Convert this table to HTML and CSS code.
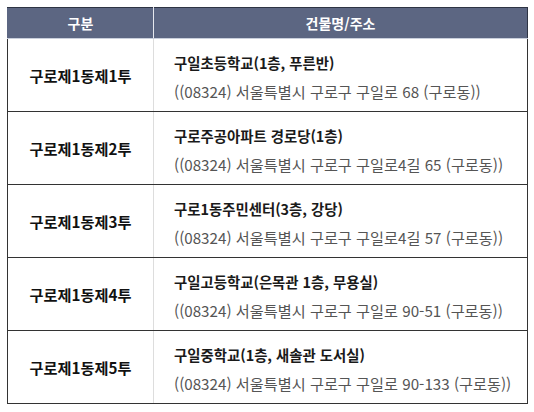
FILE: index.html
```html
<!DOCTYPE html>
<html lang="ko">
<head>
<meta charset="utf-8">
<link rel="stylesheet" href="styles.css">
</head>
<body>
<table class="tbl">
  <thead>
    <tr><th class="c1">구분</th><th class="c2">건물명/주소</th></tr>
  </thead>
  <tbody>
    <tr><td class="name">구로제1동제1투</td><td class="addr"><div class="title">구일초등학교(1층, 푸른반)</div><div class="sub">((08324) 서울특별시 구로구 구일로 68 (구로동))</div></td></tr>
    <tr><td class="name">구로제1동제2투</td><td class="addr"><div class="title">구로주공아파트 경로당(1층)</div><div class="sub">((08324) 서울특별시 구로구 구일로4길 65 (구로동))</div></td></tr>
    <tr><td class="name">구로제1동제3투</td><td class="addr"><div class="title">구로1동주민센터(3층, 강당)</div><div class="sub">((08324) 서울특별시 구로구 구일로4길 57 (구로동))</div></td></tr>
    <tr><td class="name">구로제1동제4투</td><td class="addr"><div class="title">구일고등학교(은목관 1층, 무용실)</div><div class="sub">((08324) 서울특별시 구로구 구일로 90-51 (구로동))</div></td></tr>
    <tr><td class="name">구로제1동제5투</td><td class="addr"><div class="title">구일중학교(1층, 새솔관 도서실)</div><div class="sub">((08324) 서울특별시 구로구 구일로 90-133 (구로동))</div></td></tr>
  </tbody>
</table>
</body>
</html>
```
FILE: styles.css
```css
html, body { margin: 0; padding: 0; background: #fff; }
body { padding: 7px 0 0 7px; font-family: "Noto Sans CJK KR", "Noto Sans", sans-serif; }
.tbl {
  border-collapse: collapse;
  width: 521px;
  table-layout: fixed;
}
.tbl th {
  background: #5c6682;
  color: #fff;
  font-weight: bold;
  font-size: 14px;
  height: 30px;
  padding: 0;
  border-top: 1px solid #2e3444;
  border-bottom: 1px solid #c9cfdc;
}
.tbl th.c1 { width: 145px; border-left: 1px solid #5c6682; border-right: 1px solid #e6e8ee; }
.tbl th.c2 { border-right: 1px solid #2e3444; }
.tbl tbody tr { height: 73px; }
.tbl td {
  padding: 0;
  border-bottom: 1px solid #333;
}
.tbl td.name {
  border-left: 1px solid #333;
  border-right: 1px solid #ddd;
  text-align: center;
  font-weight: bold;
  font-size: 15.2px;
  color: #111;
}
.tbl td.addr {
  border-right: 1px solid #333;
  padding-left: 20px;
  font-size: 14px;
  line-height: 28px;
}
.title { color: #1a1a1a; font-weight: bold; font-size: 14.4px; height: 28px; margin-top: 3px; }
.sub { color: #555; font-size: 15.2px; height: 28px; }
```
